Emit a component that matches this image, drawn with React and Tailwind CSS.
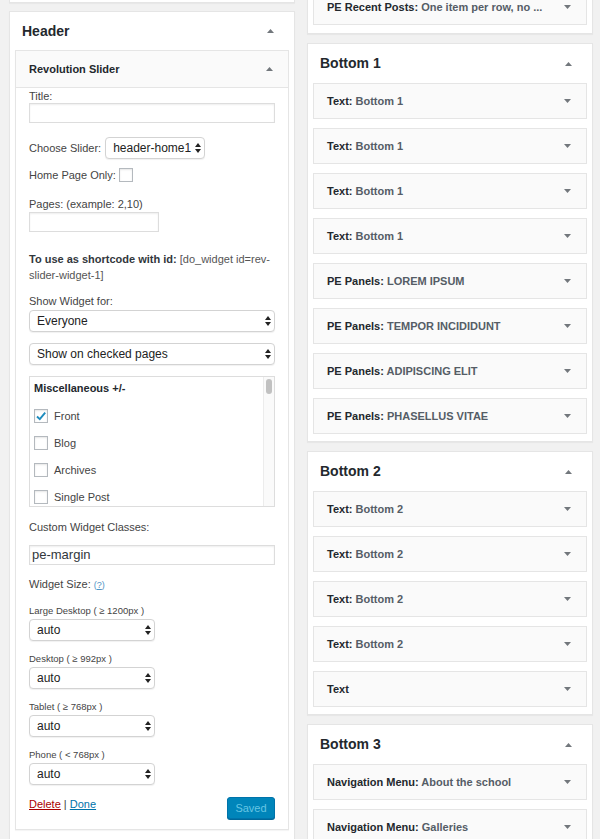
import React from "react";

function Up() {
  return (
    <svg width="7" height="4" viewBox="0 0 7 4" className="shrink-0">
      <path d="M0 4L3.5 0L7 4Z" fill="#72777c" />
    </svg>
  );
}

function Down() {
  return (
    <svg width="7" height="4" viewBox="0 0 7 4" className="shrink-0">
      <path d="M0 0H7L3.5 4Z" fill="#72777c" />
    </svg>
  );
}

function UpDown() {
  return (
    <svg width="6" height="10" viewBox="0 0 6 10" className="shrink-0">
      <path d="M0 4L3 0L6 4Z" fill="#222" />
      <path d="M0 6H6L3 10Z" fill="#222" />
    </svg>
  );
}

function Select({ value, className }) {
  return (
    <div
      className={`flex h-[22px] shrink-0 items-center justify-between rounded-[4px] border border-[#d3d3d3] bg-white pl-[7px] pr-[3px] text-[12px] leading-[14px] text-[#222] shadow-[0_1px_1px_rgba(0,0,0,0.06)] ${className}`}
    >
      <span className="whitespace-nowrap">{value}</span>
      <UpDown />
    </div>
  );
}

function Input({ value, className }) {
  return (
    <div
      className={`flex h-[20px] shrink-0 items-center border border-[#ddd] bg-white pl-[2px] text-[13px] text-[#32373c] shadow-[inset_0_1px_2px_rgba(0,0,0,0.07)] ${className}`}
    >
      {value}
    </div>
  );
}

function Checkbox({ checked }) {
  return (
    <div className="flex h-[14px] w-[14px] shrink-0 items-center justify-center border border-[#b4b9be] bg-white shadow-[inset_0_1px_2px_rgba(0,0,0,0.1)]">
      {checked && (
        <svg width="12" height="12" viewBox="0 0 12 12">
          <path d="M2 6.5L4.8 9.2L10.2 2.6" stroke="#1e8cbe" strokeWidth="1.9" fill="none" />
        </svg>
      )}
    </div>
  );
}

function Item({ label, sub }) {
  return (
    <div className="flex h-[36px] shrink-0 items-center justify-between border border-[#e5e5e5] bg-[#fafafa] pl-[13px] pr-[15px] text-[11px] font-bold">
      <span className="whitespace-nowrap">
        <span className="text-[#23282d]">{label}</span>
        {sub && <span className="text-[#555d66]"> {sub}</span>}
      </span>
      <Down />
    </div>
  );
}

function Sidebar({ title, items }) {
  return (
    <div className="shrink-0 border border-[#e5e5e5] bg-white pb-[7px] shadow-[0_1px_1px_rgba(0,0,0,0.04)]">
      <div className="flex h-[39px] items-center justify-between pl-[12px] pr-[20px]">
        <h2 className="text-[14px] font-semibold text-[#23282d]">{title}</h2>
        <Up />
      </div>
      <div className="flex flex-col gap-[9px] px-[5px]">
        {items.map((it, i) => (
          <Item key={i} label={it[0]} sub={it[1]} />
        ))}
      </div>
    </div>
  );
}

const sizes = [
  ["Large Desktop ( ≥ 1200px )", "mt-[13px]"],
  ["Desktop ( ≥ 992px )", "mt-[12px]"],
  ["Tablet ( ≥ 768px )", "mt-[12px]"],
  ["Phone ( < 768px )", "mt-[12px]"],
];

export default function App() {
  return (
    <div className="flex h-[839px] w-[600px] gap-[12px] overflow-hidden bg-[#f1f1f1] pl-[9px] font-['Liberation_Sans',Arial,sans-serif]">
      {/* Left column */}
      <div className="flex w-[286px] shrink-0 flex-col">
        <div className="h-[3px] shrink-0 border border-t-0 border-[#e5e5e5] bg-white shadow-[0_1px_1px_rgba(0,0,0,0.04)]" />
        <div className="mt-[8px] shrink-0 border border-[#e5e5e5] bg-white pb-[20px] shadow-[0_1px_1px_rgba(0,0,0,0.04)]">
          <div className="flex h-[38px] items-center justify-between pl-[12px] pr-[20px]">
            <h2 className="text-[14px] font-semibold text-[#23282d]">Header</h2>
            <Up />
          </div>
          <div className="mx-[5px] border border-[#e5e5e5] bg-white shadow-[0_1px_1px_rgba(0,0,0,0.04)]">
            <div className="flex h-[37px] items-center justify-between border-b border-[#e5e5e5] bg-[#fafafa] pl-[13px] pr-[15px]">
              <span className="text-[11px] font-bold text-[#23282d]">Revolution Slider</span>
              <Up />
            </div>
            <div className="flex flex-col px-[13px] pb-[10px] pt-[1px] text-[11px] leading-[14px] text-[#444]">
              <div>Title:</div>
              <Input className="w-full" />
              <div className="mt-[14px] flex h-[22px] items-center gap-[4px]">
                <span>Choose Slider:</span>
                <Select value="header-home1" className="w-[100px]" />
              </div>
              <div className="mt-[9px] flex h-[14px] items-center gap-[3px]">
                <span>Home Page Only:</span>
                <Checkbox />
              </div>
              <div className="mt-[15px]">Pages: (example: 2,10)</div>
              <Input className="mt-[1px] w-[130px]" />
              <div className="mt-[19px] leading-[16px] text-[#555]">
                <span className="font-bold text-[#32373c]">To use as shortcode with id:</span> [do_widget id=rev-
                <br />
                slider-widget-1]
              </div>
              <div className="mt-[11px]">Show Widget for:</div>
              <Select value="Everyone" className="mt-[2px] w-full" />
              <Select value="Show on checked pages" className="mt-[11px] w-full" />
              <div className="mt-[11px] flex h-[131px] shrink-0 overflow-hidden border border-[#ddd] bg-white">
                <div className="flex-1 pl-[4px] pt-[4px]">
                  <div className="font-bold text-[#23282d]">Miscellaneous +/-</div>
                  <div className="mt-[7px] flex flex-col">
                    {[
                      ["Front", true],
                      ["Blog", false],
                      ["Archives", false],
                      ["Single Post", false],
                    ].map(([l, c]) => (
                      <div key={l} className="flex h-[27px] shrink-0 items-center gap-[6px]">
                        <Checkbox checked={c} />
                        <span>{l}</span>
                      </div>
                    ))}
                  </div>
                </div>
                <div className="flex w-[11px] justify-center border-l border-[#ececec] bg-[#fafafa] pt-[2px]">
                  <div className="h-[15px] w-[6px] rounded-full bg-[#c1c1c1]" />
                </div>
              </div>
              <div className="mt-[13px]">Custom Widget Classes:</div>
              <Input value="pe-margin" className="mt-[11px] w-full" />
              <div className="mt-[12px]">
                Widget Size:{" "}
                <span className="text-[9px] text-[#4f94c4]">
                  (<span className="underline">?</span>)
                </span>
              </div>
              {sizes.map(([l, m]) => (
                <React.Fragment key={l}>
                  <div className={`${m} text-[9.5px] leading-[12px] text-[#444]`}>{l}</div>
                  <Select value="auto" className="mt-[2px] w-[126px]" />
                </React.Fragment>
              ))}
              <div className="mt-[12px] flex items-start justify-between">
                <div className="leading-[14px]">
                  <span className="text-[#a00] underline">Delete</span>
                  <span> | </span>
                  <span className="text-[#0073aa] underline">Done</span>
                </div>
                <div className="flex h-[22px] w-[48px] items-center justify-center rounded-[3px] border border-[#0073aa] bg-[#0085ba] text-[11px] text-[#66c6e4] shadow-[0_1px_0_#006799]">
                  Saved
                </div>
              </div>
            </div>
          </div>
        </div>
      </div>

      {/* Right column */}
      <div className="flex w-[286px] shrink-0 flex-col gap-[9px]">
        <div className="mt-[-20px] shrink-0 border border-[#e5e5e5] bg-white px-[5px] pb-[8px] pt-[8px] shadow-[0_1px_1px_rgba(0,0,0,0.04)]">
          <Item label="PE Recent Posts:" sub="One item per row, no ..." />
        </div>
        <Sidebar
          title="Bottom 1"
          items={[
            ["Text:", "Bottom 1"],
            ["Text:", "Bottom 1"],
            ["Text:", "Bottom 1"],
            ["Text:", "Bottom 1"],
            ["PE Panels:", "LOREM IPSUM"],
            ["PE Panels:", "TEMPOR INCIDIDUNT"],
            ["PE Panels:", "ADIPISCING ELIT"],
            ["PE Panels:", "PHASELLUS VITAE"],
          ]}
        />
        <Sidebar
          title="Bottom 2"
          items={[
            ["Text:", "Bottom 2"],
            ["Text:", "Bottom 2"],
            ["Text:", "Bottom 2"],
            ["Text:", "Bottom 2"],
            ["Text", null],
          ]}
        />
        <Sidebar
          title="Bottom 3"
          items={[
            ["Navigation Menu:", "About the school"],
            ["Navigation Menu:", "Galleries"],
          ]}
        />
      </div>
    </div>
  );
}
